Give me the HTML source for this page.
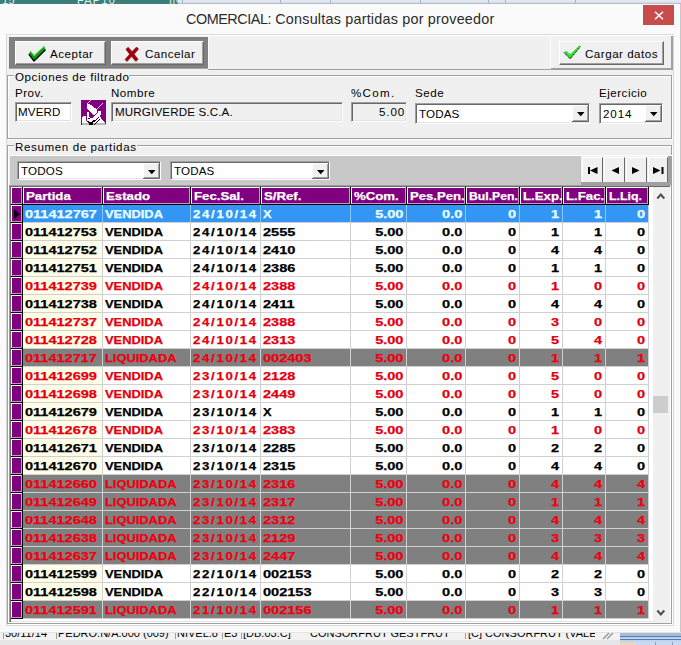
<!DOCTYPE html><html><head><meta charset="utf-8"><style>
*{margin:0;padding:0;box-sizing:border-box}
html,body{width:681px;height:645px;overflow:hidden;background:#fafafa;font-family:"Liberation Sans",sans-serif;font-size:11px;color:#000}
.a{position:absolute}
.t{position:absolute;white-space:pre;line-height:12px;letter-spacing:0.5px;font-size:11.6px}
.u{letter-spacing:0.15px}
.n{letter-spacing:0.9px}
.b{position:absolute;white-space:pre;line-height:13px;font-weight:bold;-webkit-text-stroke:0.25px}
.sl{transform-origin:0 0}
.sr{transform-origin:100% 0}
</style></head><body>
<div class="a" style="left:0;top:0;width:178px;height:4px;background:#3f7d7b;overflow:hidden"><div class="t" style="left:2px;top:-6px;color:#d8f4f0;font-size:11px;letter-spacing:0.5px">15</div><div class="t" style="left:77px;top:-6px;color:#d8f4f0;font-size:11px;letter-spacing:1.2px">FAP10</div><div class="t" style="left:169px;top:-6px;color:#d8f4f0;font-size:11px">IN</div></div>
<div class="a" style="left:178px;top:0;width:503px;height:4px;background:linear-gradient(#e6ebf2,#d4dce8);border-bottom:1px solid #b4bfcc"></div>
<div class="a" style="left:182px;top:0;width:1px;height:4px;background:#a8b4c4"></div>
<div class="a" style="left:280px;top:0;width:1px;height:4px;background:#a8b4c4"></div>
<div class="a" style="left:330px;top:0;width:1px;height:4px;background:#a8b4c4"></div>
<div class="a" style="left:420px;top:0;width:1px;height:4px;background:#a8b4c4"></div>
<div class="a" style="left:488px;top:0;width:1px;height:4px;background:#a8b4c4"></div>
<div class="a" style="left:505px;top:0;width:1px;height:4px;background:#a8b4c4"></div>
<div class="a" style="left:575px;top:0;width:1px;height:4px;background:#a8b4c4"></div>
<div class="a" style="left:186px;top:9px;white-space:pre;font-size:14.4px;line-height:20px;color:#2b2b2b"><span style="letter-spacing:-0.45px">COMERCIAL:</span><span style="letter-spacing:0.2px"> Consultas partidas por proveedor</span></div>
<div class="a" style="left:643px;top:5px;width:31px;height:20px;background:#c94c4c"></div>
<svg class="a" style="left:654px;top:11px" width="10" height="9" viewBox="0 0 10 9"><path d="M1 0.8 L9 8.2 M9 0.8 L1 8.2" stroke="#fff" stroke-width="1.5"/></svg>
<div class="a" style="left:6px;top:34px;width:668px;height:592px;background:#f0f0f0;border:1px solid #d9d9d9"></div>
<div class="a" style="left:7px;top:35px;width:666px;height:1px;background:#fff"></div>
<div class="a" style="left:9px;top:37px;width:199px;height:32px;background:#808080;border-bottom:1px solid #a4a4a4"></div>
<div class="a" style="left:15px;top:41px;width:91px;height:24px;background:#f0f0f0;border-top:1px solid #fff;border-left:1px solid #fff;border-right:1px solid #696969;border-bottom:1px solid #696969;box-shadow:inset -1px -1px 0 #a0a0a0"></div>
<div class="a" style="left:111px;top:41px;width:93px;height:24px;background:#f0f0f0;border-top:1px solid #fff;border-left:1px solid #fff;border-right:1px solid #696969;border-bottom:1px solid #696969;box-shadow:inset -1px -1px 0 #a0a0a0"></div>
<svg class="a" style="left:24px;top:42px" width="24" height="22" viewBox="0 0 24 22"><path d="M6.5 9 L4.8 12.2 L10 19 L21.5 7.8 L20.3 4.2 L10 14 Z" fill="#139a13"/><path d="M4.8 12.2 L10 19 L21.5 7.8" fill="none" stroke="#000" stroke-width="1.3" stroke-linejoin="round"/><path d="M6.5 9 L10 13.2 L20.3 4.2" fill="none" stroke="#5ee05e" stroke-width="1"/></svg>
<div class="t" style="left:50px;top:48px">Aceptar</div>
<svg class="a" style="left:124px;top:46px" width="16" height="17" viewBox="0 0 16 17"><path d="M1.8 3.2 L4.2 1.2 L8 5.6 L12.6 1 L14.6 3 L10.2 8.2 L14.2 13.3 L11.8 15.4 L7.6 10.6 L3 15.6 L1 13.6 L5.6 8.2 Z" fill="#a00010" stroke="#8a0010" stroke-width="0.5" stroke-linejoin="round"/></svg>
<div class="t" style="left:145px;top:48px">Cancelar</div>
<div class="a" style="left:208px;top:69px;width:342px;height:1px;background:#a0a0a0"></div>
<div class="a" style="left:208px;top:36px;width:1px;height:33px;background:#fafafa"></div>
<div class="a" style="left:550px;top:36px;width:123px;height:34px;background:#f0f0f0;border-left:1px solid #fff;border-bottom:2px solid #a0a0a0;border-right:2px solid #a0a0a0"></div>
<div class="a" style="left:559px;top:41px;width:105px;height:24px;background:#f0f0f0;border-top:1px solid #fff;border-left:1px solid #fff;border-right:1px solid #696969;border-bottom:1px solid #696969;box-shadow:inset -1px -1px 0 #a0a0a0"></div>
<svg class="a" style="left:559px;top:41px" width="24" height="22" viewBox="0 0 24 22"><path d="M4.8 11.2 L7.6 10 L11 13.4 L20.4 4.6 L21.4 5.6 L11.2 17.9 Z" fill="#2ee02e"/><path d="M5 11.6 L11.2 17.9 L21.4 5.6" fill="none" stroke="#000" stroke-width="1" stroke-dasharray="1.2 0.8"/></svg>
<div class="t" style="left:585px;top:48px">Cargar datos</div>
<div class="a" style="left:8px;top:76px;width:665px;height:64px;border:1px solid #fff"></div>
<div class="a" style="left:7px;top:75px;width:665px;height:64px;border:1px solid #a0a0a0"></div>
<div class="a" style="left:14px;top:71px;width:115px;height:8px;background:#f0f0f0"></div>
<div class="t" style="left:15px;top:71px;letter-spacing:0.57px">Opciones de filtrado</div>
<div class="t" style="left:15px;top:87px">Prov.</div>
<div class="t" style="left:111px;top:87px">Nombre</div>
<div class="t" style="left:351px;top:87px;letter-spacing:1.3px">%Com.</div>
<div class="t" style="left:415px;top:87px">Sede</div>
<div class="t" style="left:599px;top:87px">Ejercicio</div>
<div class="a" style="left:15px;top:102px;width:57px;height:20px;background:#fff;border-top:1px solid #a0a0a0;border-left:1px solid #a0a0a0;border-right:1px solid #fff;border-bottom:1px solid #fff;box-shadow:inset 1px 1px 0 #696969,inset -1px -1px 0 #e3e3e3"></div>
<div class="t u" style="left:18px;top:106px">MVERD</div>
<svg class="a" style="left:81px;top:100px" width="25" height="25" viewBox="0 0 25 25" shape-rendering="crispEdges"><rect width="25" height="25" fill="#800080"/><rect x="9" y="0" width="1" height="1" fill="#f0c8f0"/><rect x="8" y="1" width="1" height="1" fill="#f0c8f0"/><rect x="7" y="2" width="1" height="1" fill="#f0c8f0"/><rect x="6" y="3" width="1" height="1" fill="#f0c8f0"/><rect x="21" y="3" width="1" height="1" fill="#f0c8f0"/><rect x="6" y="4" width="3" height="1" fill="#fff6ff"/><rect x="20" y="4" width="1" height="1" fill="#f0c8f0"/><rect x="6" y="5" width="5" height="1" fill="#fff6ff"/><rect x="19" y="5" width="1" height="1" fill="#f0c8f0"/><rect x="6" y="6" width="6" height="1" fill="#fff6ff"/><rect x="18" y="6" width="1" height="1" fill="#f0c8f0"/><rect x="6" y="7" width="7" height="1" fill="#fff6ff"/><rect x="17" y="7" width="1" height="1" fill="#f0c8f0"/><rect x="6" y="8" width="9" height="1" fill="#fff6ff"/><rect x="16" y="8" width="1" height="1" fill="#f0c8f0"/><rect x="7" y="9" width="9" height="1" fill="#fff6ff"/><rect x="8" y="10" width="8" height="1" fill="#fff6ff"/><rect x="9" y="11" width="7" height="1" fill="#fff6ff"/><rect x="17" y="11" width="3" height="1" fill="#fff6ff"/><rect x="6" y="12" width="2" height="1" fill="#fff6ff"/><rect x="10" y="12" width="6" height="1" fill="#fff6ff"/><rect x="17" y="12" width="3" height="1" fill="#fff6ff"/><rect x="6" y="13" width="2" height="1" fill="#fff6ff"/><rect x="11" y="13" width="4" height="1" fill="#fff6ff"/><rect x="16" y="13" width="4" height="1" fill="#fff6ff"/><rect x="6" y="14" width="2" height="1" fill="#fff6ff"/><rect x="12" y="14" width="2" height="1" fill="#fff6ff"/><rect x="15" y="14" width="5" height="1" fill="#fff6ff"/><rect x="6" y="15" width="2" height="1" fill="#fff6ff"/><rect x="14" y="15" width="5" height="1" fill="#fff6ff"/><rect x="2" y="16" width="3" height="1" fill="#fff6ff"/><rect x="6" y="16" width="2" height="1" fill="#fff6ff"/><rect x="13" y="16" width="6" height="1" fill="#fff6ff"/><rect x="1" y="17" width="4" height="1" fill="#fff6ff"/><rect x="6" y="17" width="3" height="1" fill="#fff6ff"/><rect x="12" y="17" width="5" height="1" fill="#fff6ff"/><rect x="17" y="17" width="1" height="1" fill="#000"/><rect x="18" y="17" width="2" height="1" fill="#fff6ff"/><rect x="1" y="18" width="4" height="1" fill="#fff6ff"/><rect x="6" y="18" width="1" height="1" fill="#fff6ff"/><rect x="7" y="18" width="2" height="1" fill="#000"/><rect x="9" y="18" width="7" height="1" fill="#fff6ff"/><rect x="16" y="18" width="1" height="1" fill="#000"/><rect x="17" y="18" width="3" height="1" fill="#fff6ff"/><rect x="1" y="19" width="4" height="1" fill="#fff6ff"/><rect x="6" y="19" width="9" height="1" fill="#fff6ff"/><rect x="15" y="19" width="1" height="1" fill="#000"/><rect x="16" y="19" width="2" height="1" fill="#fff6ff"/><rect x="18" y="19" width="1" height="1" fill="#000"/><rect x="19" y="19" width="2" height="1" fill="#fff6ff"/><rect x="1" y="20" width="4" height="1" fill="#fff6ff"/><rect x="6" y="20" width="6" height="1" fill="#fff6ff"/><rect x="12" y="20" width="3" height="1" fill="#000"/><rect x="15" y="20" width="2" height="1" fill="#fff6ff"/><rect x="17" y="20" width="1" height="1" fill="#000"/><rect x="18" y="20" width="4" height="1" fill="#fff6ff"/><rect x="1" y="21" width="5" height="1" fill="#fff6ff"/><rect x="6" y="21" width="2" height="1" fill="#000"/><rect x="8" y="21" width="3" height="1" fill="#fff6ff"/><rect x="11" y="21" width="3" height="1" fill="#000"/><rect x="14" y="21" width="2" height="1" fill="#fff6ff"/><rect x="16" y="21" width="1" height="1" fill="#000"/><rect x="17" y="21" width="6" height="1" fill="#fff6ff"/><rect x="1" y="22" width="6" height="1" fill="#fff6ff"/><rect x="7" y="22" width="5" height="1" fill="#000"/><rect x="12" y="22" width="3" height="1" fill="#fff6ff"/><rect x="15" y="22" width="1" height="1" fill="#000"/><rect x="16" y="22" width="8" height="1" fill="#fff6ff"/><rect x="1" y="23" width="7" height="1" fill="#b8b8b8"/><rect x="8" y="23" width="4" height="1" fill="#000"/><rect x="12" y="23" width="2" height="1" fill="#b8b8b8"/><rect x="14" y="23" width="1" height="1" fill="#000"/><rect x="15" y="23" width="9" height="1" fill="#b8b8b8"/><rect x="1" y="24" width="7" height="1" fill="#b8b8b8"/><rect x="8" y="24" width="4" height="1" fill="#000"/><rect x="12" y="24" width="1" height="1" fill="#b8b8b8"/><rect x="13" y="24" width="1" height="1" fill="#000"/><rect x="14" y="24" width="11" height="1" fill="#b8b8b8"/></svg>
<div class="a" style="left:111px;top:102px;width:232px;height:20px;background:#f0f0f0;border-top:1px solid #a0a0a0;border-left:1px solid #a0a0a0;border-right:1px solid #fff;border-bottom:1px solid #fff;box-shadow:inset 1px 1px 0 #696969,inset -1px -1px 0 #e3e3e3"></div>
<div class="t u" style="left:115px;top:106px">MURGIVERDE S.C.A.</div>
<div class="a" style="left:351px;top:102px;width:56px;height:20px;background:#f0f0f0;border-top:1px solid #a0a0a0;border-left:1px solid #a0a0a0;border-right:1px solid #fff;border-bottom:1px solid #fff;box-shadow:inset 1px 1px 0 #696969,inset -1px -1px 0 #e3e3e3"></div>
<div class="t n" style="left:379px;top:106px">5.00</div>
<div class="a" style="left:415px;top:103px;width:175px;height:21px;background:#fff;border-top:1px solid #a0a0a0;border-left:1px solid #a0a0a0;border-right:1px solid #fff;border-bottom:1px solid #fff;box-shadow:inset 1px 1px 0 #696969,inset -1px -1px 0 #e3e3e3"></div>
<div class="t u" style="left:419px;top:108px">TODAS</div>
<div class="a" style="left:572px;top:105px;width:17px;height:17px;background:#f0f0f0;border-right:1px solid #696969;border-bottom:1px solid #696969;box-shadow:inset 1px 1px 0 #fff,inset -1px -1px 0 #a0a0a0"></div>
<svg class="a" style="left:577px;top:112px" width="8" height="5" viewBox="0 0 8 5"><path d="M0 0 L7.5 0 L3.75 4.2 Z" fill="#000"/></svg>
<div class="a" style="left:599px;top:103px;width:64px;height:21px;background:#fff;border-top:1px solid #a0a0a0;border-left:1px solid #a0a0a0;border-right:1px solid #fff;border-bottom:1px solid #fff;box-shadow:inset 1px 1px 0 #696969,inset -1px -1px 0 #e3e3e3"></div>
<div class="t n" style="left:603px;top:108px">2014</div>
<div class="a" style="left:645px;top:105px;width:17px;height:17px;background:#f0f0f0;border-right:1px solid #696969;border-bottom:1px solid #696969;box-shadow:inset 1px 1px 0 #fff,inset -1px -1px 0 #a0a0a0"></div>
<svg class="a" style="left:650px;top:112px" width="8" height="5" viewBox="0 0 8 5"><path d="M0 0 L7.5 0 L3.75 4.2 Z" fill="#000"/></svg>
<div class="a" style="left:8px;top:146px;width:665px;height:479px;border:1px solid #fff"></div>
<div class="a" style="left:7px;top:145px;width:665px;height:479px;border:1px solid #a0a0a0"></div>
<div class="a" style="left:14px;top:141px;width:123px;height:8px;background:#f0f0f0"></div>
<div class="t" style="left:15px;top:141px;letter-spacing:0.6px">Resumen de partidas</div>
<div class="a" style="left:10px;top:155px;width:662px;height:1px;background:#fff"></div>
<div class="a" style="left:10px;top:156px;width:571px;height:29px;background:#c8c8c8"></div>
<div class="a" style="left:17px;top:161px;width:144px;height:19px;background:#fff;border-top:1px solid #a0a0a0;border-left:1px solid #a0a0a0;border-right:1px solid #fff;border-bottom:1px solid #fff;box-shadow:inset 1px 1px 0 #696969,inset -1px -1px 0 #e3e3e3"></div>
<div class="t u" style="left:21px;top:165px">TODOS</div>
<div class="a" style="left:143px;top:163px;width:17px;height:16px;background:#f0f0f0;border-right:1px solid #696969;border-bottom:1px solid #696969;box-shadow:inset 1px 1px 0 #fff,inset -1px -1px 0 #a0a0a0"></div>
<svg class="a" style="left:148px;top:170px" width="8" height="5" viewBox="0 0 8 5"><path d="M0 0 L7.5 0 L3.75 4.2 Z" fill="#000"/></svg>
<div class="a" style="left:170px;top:161px;width:160px;height:19px;background:#fff;border-top:1px solid #a0a0a0;border-left:1px solid #a0a0a0;border-right:1px solid #fff;border-bottom:1px solid #fff;box-shadow:inset 1px 1px 0 #696969,inset -1px -1px 0 #e3e3e3"></div>
<div class="t u" style="left:174px;top:165px">TODAS</div>
<div class="a" style="left:312px;top:163px;width:17px;height:16px;background:#f0f0f0;border-right:1px solid #696969;border-bottom:1px solid #696969;box-shadow:inset 1px 1px 0 #fff,inset -1px -1px 0 #a0a0a0"></div>
<svg class="a" style="left:317px;top:170px" width="8" height="5" viewBox="0 0 8 5"><path d="M0 0 L7.5 0 L3.75 4.2 Z" fill="#000"/></svg>
<div class="a" style="left:581px;top:156px;width:90px;height:29px;background:#f0f0f0;border-right:3px solid #a0a0a0;border-bottom:3px solid #a0a0a0"></div>
<div class="a" style="left:582px;top:157px;width:21px;height:25px;background:#f0f0f0;border-top:1px solid #fff;border-left:1px solid #fff;border-right:1px solid #696969"></div>
<div class="a" style="left:604px;top:157px;width:21px;height:25px;background:#f0f0f0;border-top:1px solid #fff;border-left:1px solid #fff;border-right:1px solid #696969"></div>
<div class="a" style="left:626px;top:157px;width:21px;height:25px;background:#f0f0f0;border-top:1px solid #fff;border-left:1px solid #fff;border-right:1px solid #696969"></div>
<div class="a" style="left:648px;top:157px;width:20px;height:25px;background:#f0f0f0;border-top:1px solid #fff;border-left:1px solid #fff;border-right:1px solid #696969"></div>
<svg class="a" style="left:588px;top:167px" width="10" height="8"><rect x="0" y="0" width="2" height="7" fill="#000"/><path d="M9.5 0 L9.5 7 L2 3.5 Z" fill="#000"/></svg>
<svg class="a" style="left:611px;top:167px" width="9" height="8"><path d="M8 0 L8 7 L0.5 3.5 Z" fill="#000"/></svg>
<svg class="a" style="left:632px;top:167px" width="9" height="8"><path d="M0 0 L0 7 L7.5 3.5 Z" fill="#000"/></svg>
<svg class="a" style="left:653px;top:167px" width="11" height="8"><path d="M0 0 L0 7 L7.5 3.5 Z" fill="#000"/><rect x="8.5" y="0" width="2" height="7" fill="#000"/></svg>
<div class="a" style="left:9px;top:185px;width:662px;height:438px;background:#fff;border-top:1px solid #a0a0a0;border-left:1px solid #a0a0a0;border-right:1px solid #fff;border-bottom:1px solid #fff;box-shadow:inset 1px 1px 0 #696969,inset -1px -1px 0 #e3e3e3"></div>
<div class="a" style="left:11px;top:187px;width:638px;height:18px;background:#000"></div>
<div class="a" style="left:11px;top:187px;width:11px;height:17px;background:#800080;border-top:1px solid #fff;border-left:1px solid #fff;border-right:1px solid #c896c8;border-bottom:1px solid #c896c8"></div>
<div class="a" style="left:23px;top:187px;width:79px;height:17px;background:#800080;border-top:1px solid #fff;border-left:1px solid #fff;border-right:1px solid #c896c8;border-bottom:1px solid #c896c8"></div>
<div class="b sl" style="left:26px;top:190px;color:#fff;transform:scaleX(1.2)">Partida</div>
<div class="a" style="left:103px;top:187px;width:87px;height:17px;background:#800080;border-top:1px solid #fff;border-left:1px solid #fff;border-right:1px solid #c896c8;border-bottom:1px solid #c896c8"></div>
<div class="b sl" style="left:106px;top:190px;color:#fff;transform:scaleX(1.2)">Estado</div>
<div class="a" style="left:191px;top:187px;width:69px;height:17px;background:#800080;border-top:1px solid #fff;border-left:1px solid #fff;border-right:1px solid #c896c8;border-bottom:1px solid #c896c8"></div>
<div class="b sl" style="left:194px;top:190px;color:#fff;transform:scaleX(1.2)">Fec.Sal.</div>
<div class="a" style="left:261px;top:187px;width:89px;height:17px;background:#800080;border-top:1px solid #fff;border-left:1px solid #fff;border-right:1px solid #c896c8;border-bottom:1px solid #c896c8"></div>
<div class="b sl" style="left:264px;top:190px;color:#fff;transform:scaleX(1.2)">S/Ref.</div>
<div class="a" style="left:351px;top:187px;width:55px;height:17px;background:#800080;border-top:1px solid #fff;border-left:1px solid #fff;border-right:1px solid #c896c8;border-bottom:1px solid #c896c8"></div>
<div class="b sl" style="left:354px;top:190px;color:#fff;transform:scaleX(1.2)">%Com.</div>
<div class="a" style="left:407px;top:187px;width:58px;height:17px;background:#800080;border-top:1px solid #fff;border-left:1px solid #fff;border-right:1px solid #c896c8;border-bottom:1px solid #c896c8"></div>
<div class="b sl" style="left:410px;top:190px;color:#fff;transform:scaleX(1.19)">Pes.Pen.</div>
<div class="a" style="left:466px;top:187px;width:53px;height:17px;background:#800080;border-top:1px solid #fff;border-left:1px solid #fff;border-right:1px solid #c896c8;border-bottom:1px solid #c896c8"></div>
<div class="b sl" style="left:469px;top:190px;color:#fff;transform:scaleX(1.11)">Bul.Pen.</div>
<div class="a" style="left:520px;top:187px;width:42px;height:17px;background:#800080;border-top:1px solid #fff;border-left:1px solid #fff;border-right:1px solid #c896c8;border-bottom:1px solid #c896c8"></div>
<div class="b sl" style="left:523px;top:190px;color:#fff;transform:scaleX(1.2)">L.Exp.</div>
<div class="a" style="left:563px;top:187px;width:42px;height:17px;background:#800080;border-top:1px solid #fff;border-left:1px solid #fff;border-right:1px solid #c896c8;border-bottom:1px solid #c896c8"></div>
<div class="b sl" style="left:566px;top:190px;color:#fff;transform:scaleX(1.2)">L.Fac.</div>
<div class="a" style="left:606px;top:187px;width:42px;height:17px;background:#800080;border-top:1px solid #fff;border-left:1px solid #fff;border-right:1px solid #c896c8;border-bottom:1px solid #c896c8"></div>
<div class="b sl" style="left:609px;top:190px;color:#fff;transform:scaleX(1.12)">L.Liq.</div>
<div class="a" style="left:11px;top:205px;width:12px;height:18px;background:#000"></div>
<div class="a" style="left:11px;top:205px;width:11px;height:17px;background:#800080;border-top:1px solid #fff;border-left:1px solid #fff;border-right:1px solid #c896c8;border-bottom:1px solid #c896c8"></div>
<svg class="a" style="left:13px;top:209px" width="8" height="10"><path d="M1 0 L7 5 L1 10 Z" fill="#000"/></svg>
<div class="a" style="left:23px;top:205px;width:626px;height:17px;background:#3396f4"></div>
<div class="a" style="left:23px;top:222px;width:626px;height:1px;background:#d0d0d0"></div>
<div class="a" style="left:102px;top:205px;width:1px;height:17px;background:#8cc6ff"></div>
<div class="a" style="left:190px;top:205px;width:1px;height:17px;background:#8cc6ff"></div>
<div class="a" style="left:260px;top:205px;width:1px;height:17px;background:#8cc6ff"></div>
<div class="a" style="left:350px;top:205px;width:1px;height:17px;background:#8cc6ff"></div>
<div class="a" style="left:406px;top:205px;width:1px;height:17px;background:#8cc6ff"></div>
<div class="a" style="left:465px;top:205px;width:1px;height:17px;background:#8cc6ff"></div>
<div class="a" style="left:519px;top:205px;width:1px;height:17px;background:#8cc6ff"></div>
<div class="a" style="left:562px;top:205px;width:1px;height:17px;background:#8cc6ff"></div>
<div class="a" style="left:605px;top:205px;width:1px;height:17px;background:#8cc6ff"></div>
<div class="a" style="left:648px;top:205px;width:1px;height:18px;background:#d0d0d0"></div>
<div class="b sl" style="left:25px;top:208px;color:#e8ffff;transform:scaleX(1.32)">011412767</div>
<div class="b sl" style="left:105px;top:208px;color:#e8ffff;transform:scaleX(1.17)">VENDIDA</div>
<div class="b sl" style="left:193px;top:208px;color:#e8ffff;transform:scaleX(1.2);letter-spacing:1.4px">24/10/14</div>
<div class="b sl" style="left:263px;top:208px;color:#e8ffff;transform:scaleX(1.17)">X</div>
<div class="b sr" style="right:278px;top:208px;color:#e8ffff;transform:scaleX(1.32)">5.00</div>
<div class="b sr" style="right:219px;top:208px;color:#e8ffff;transform:scaleX(1.32)">0.0</div>
<div class="b sr" style="right:165px;top:208px;color:#e8ffff;transform:scaleX(1.32)">0</div>
<div class="b sr" style="right:122px;top:208px;color:#e8ffff;transform:scaleX(1.32)">1</div>
<div class="b sr" style="right:79px;top:208px;color:#e8ffff;transform:scaleX(1.32)">1</div>
<div class="b sr" style="right:36px;top:208px;color:#e8ffff;transform:scaleX(1.32)">0</div>
<div class="a" style="left:11px;top:223px;width:12px;height:18px;background:#000"></div>
<div class="a" style="left:11px;top:223px;width:11px;height:17px;background:#800080;border-top:1px solid #fff;border-left:1px solid #fff;border-right:1px solid #c896c8;border-bottom:1px solid #c896c8"></div>
<div class="a" style="left:23px;top:223px;width:626px;height:17px;background:#fff"></div>
<div class="a" style="left:23px;top:223px;width:79px;height:17px;background:#fffde8"></div>
<div class="a" style="left:23px;top:240px;width:626px;height:1px;background:#d0d0d0"></div>
<div class="a" style="left:102px;top:223px;width:1px;height:17px;background:#d0d0d0"></div>
<div class="a" style="left:190px;top:223px;width:1px;height:17px;background:#d0d0d0"></div>
<div class="a" style="left:260px;top:223px;width:1px;height:17px;background:#d0d0d0"></div>
<div class="a" style="left:350px;top:223px;width:1px;height:17px;background:#d0d0d0"></div>
<div class="a" style="left:406px;top:223px;width:1px;height:17px;background:#d0d0d0"></div>
<div class="a" style="left:465px;top:223px;width:1px;height:17px;background:#d0d0d0"></div>
<div class="a" style="left:519px;top:223px;width:1px;height:17px;background:#d0d0d0"></div>
<div class="a" style="left:562px;top:223px;width:1px;height:17px;background:#d0d0d0"></div>
<div class="a" style="left:605px;top:223px;width:1px;height:17px;background:#d0d0d0"></div>
<div class="a" style="left:648px;top:223px;width:1px;height:18px;background:#d0d0d0"></div>
<div class="b sl" style="left:25px;top:226px;color:#000;transform:scaleX(1.32)">011412753</div>
<div class="b sl" style="left:105px;top:226px;color:#000;transform:scaleX(1.17)">VENDIDA</div>
<div class="b sl" style="left:193px;top:226px;color:#000;transform:scaleX(1.2);letter-spacing:1.4px">24/10/14</div>
<div class="b sl" style="left:263px;top:226px;color:#000;transform:scaleX(1.32)">2555</div>
<div class="b sr" style="right:278px;top:226px;color:#000;transform:scaleX(1.32)">5.00</div>
<div class="b sr" style="right:219px;top:226px;color:#000;transform:scaleX(1.32)">0.0</div>
<div class="b sr" style="right:165px;top:226px;color:#000;transform:scaleX(1.32)">0</div>
<div class="b sr" style="right:122px;top:226px;color:#000;transform:scaleX(1.32)">1</div>
<div class="b sr" style="right:79px;top:226px;color:#000;transform:scaleX(1.32)">1</div>
<div class="b sr" style="right:36px;top:226px;color:#000;transform:scaleX(1.32)">0</div>
<div class="a" style="left:11px;top:241px;width:12px;height:18px;background:#000"></div>
<div class="a" style="left:11px;top:241px;width:11px;height:17px;background:#800080;border-top:1px solid #fff;border-left:1px solid #fff;border-right:1px solid #c896c8;border-bottom:1px solid #c896c8"></div>
<div class="a" style="left:23px;top:241px;width:626px;height:17px;background:#fff"></div>
<div class="a" style="left:23px;top:241px;width:79px;height:17px;background:#fffde8"></div>
<div class="a" style="left:23px;top:258px;width:626px;height:1px;background:#d0d0d0"></div>
<div class="a" style="left:102px;top:241px;width:1px;height:17px;background:#d0d0d0"></div>
<div class="a" style="left:190px;top:241px;width:1px;height:17px;background:#d0d0d0"></div>
<div class="a" style="left:260px;top:241px;width:1px;height:17px;background:#d0d0d0"></div>
<div class="a" style="left:350px;top:241px;width:1px;height:17px;background:#d0d0d0"></div>
<div class="a" style="left:406px;top:241px;width:1px;height:17px;background:#d0d0d0"></div>
<div class="a" style="left:465px;top:241px;width:1px;height:17px;background:#d0d0d0"></div>
<div class="a" style="left:519px;top:241px;width:1px;height:17px;background:#d0d0d0"></div>
<div class="a" style="left:562px;top:241px;width:1px;height:17px;background:#d0d0d0"></div>
<div class="a" style="left:605px;top:241px;width:1px;height:17px;background:#d0d0d0"></div>
<div class="a" style="left:648px;top:241px;width:1px;height:18px;background:#d0d0d0"></div>
<div class="b sl" style="left:25px;top:244px;color:#000;transform:scaleX(1.32)">011412752</div>
<div class="b sl" style="left:105px;top:244px;color:#000;transform:scaleX(1.17)">VENDIDA</div>
<div class="b sl" style="left:193px;top:244px;color:#000;transform:scaleX(1.2);letter-spacing:1.4px">24/10/14</div>
<div class="b sl" style="left:263px;top:244px;color:#000;transform:scaleX(1.32)">2410</div>
<div class="b sr" style="right:278px;top:244px;color:#000;transform:scaleX(1.32)">5.00</div>
<div class="b sr" style="right:219px;top:244px;color:#000;transform:scaleX(1.32)">0.0</div>
<div class="b sr" style="right:165px;top:244px;color:#000;transform:scaleX(1.32)">0</div>
<div class="b sr" style="right:122px;top:244px;color:#000;transform:scaleX(1.32)">4</div>
<div class="b sr" style="right:79px;top:244px;color:#000;transform:scaleX(1.32)">4</div>
<div class="b sr" style="right:36px;top:244px;color:#000;transform:scaleX(1.32)">0</div>
<div class="a" style="left:11px;top:259px;width:12px;height:18px;background:#000"></div>
<div class="a" style="left:11px;top:259px;width:11px;height:17px;background:#800080;border-top:1px solid #fff;border-left:1px solid #fff;border-right:1px solid #c896c8;border-bottom:1px solid #c896c8"></div>
<div class="a" style="left:23px;top:259px;width:626px;height:17px;background:#fff"></div>
<div class="a" style="left:23px;top:259px;width:79px;height:17px;background:#fffde8"></div>
<div class="a" style="left:23px;top:276px;width:626px;height:1px;background:#d0d0d0"></div>
<div class="a" style="left:102px;top:259px;width:1px;height:17px;background:#d0d0d0"></div>
<div class="a" style="left:190px;top:259px;width:1px;height:17px;background:#d0d0d0"></div>
<div class="a" style="left:260px;top:259px;width:1px;height:17px;background:#d0d0d0"></div>
<div class="a" style="left:350px;top:259px;width:1px;height:17px;background:#d0d0d0"></div>
<div class="a" style="left:406px;top:259px;width:1px;height:17px;background:#d0d0d0"></div>
<div class="a" style="left:465px;top:259px;width:1px;height:17px;background:#d0d0d0"></div>
<div class="a" style="left:519px;top:259px;width:1px;height:17px;background:#d0d0d0"></div>
<div class="a" style="left:562px;top:259px;width:1px;height:17px;background:#d0d0d0"></div>
<div class="a" style="left:605px;top:259px;width:1px;height:17px;background:#d0d0d0"></div>
<div class="a" style="left:648px;top:259px;width:1px;height:18px;background:#d0d0d0"></div>
<div class="b sl" style="left:25px;top:262px;color:#000;transform:scaleX(1.32)">011412751</div>
<div class="b sl" style="left:105px;top:262px;color:#000;transform:scaleX(1.17)">VENDIDA</div>
<div class="b sl" style="left:193px;top:262px;color:#000;transform:scaleX(1.2);letter-spacing:1.4px">24/10/14</div>
<div class="b sl" style="left:263px;top:262px;color:#000;transform:scaleX(1.32)">2386</div>
<div class="b sr" style="right:278px;top:262px;color:#000;transform:scaleX(1.32)">5.00</div>
<div class="b sr" style="right:219px;top:262px;color:#000;transform:scaleX(1.32)">0.0</div>
<div class="b sr" style="right:165px;top:262px;color:#000;transform:scaleX(1.32)">0</div>
<div class="b sr" style="right:122px;top:262px;color:#000;transform:scaleX(1.32)">1</div>
<div class="b sr" style="right:79px;top:262px;color:#000;transform:scaleX(1.32)">1</div>
<div class="b sr" style="right:36px;top:262px;color:#000;transform:scaleX(1.32)">0</div>
<div class="a" style="left:11px;top:277px;width:12px;height:18px;background:#000"></div>
<div class="a" style="left:11px;top:277px;width:11px;height:17px;background:#800080;border-top:1px solid #fff;border-left:1px solid #fff;border-right:1px solid #c896c8;border-bottom:1px solid #c896c8"></div>
<div class="a" style="left:23px;top:277px;width:626px;height:17px;background:#fff"></div>
<div class="a" style="left:23px;top:277px;width:79px;height:17px;background:#fffde8"></div>
<div class="a" style="left:23px;top:294px;width:626px;height:1px;background:#d0d0d0"></div>
<div class="a" style="left:102px;top:277px;width:1px;height:17px;background:#d0d0d0"></div>
<div class="a" style="left:190px;top:277px;width:1px;height:17px;background:#d0d0d0"></div>
<div class="a" style="left:260px;top:277px;width:1px;height:17px;background:#d0d0d0"></div>
<div class="a" style="left:350px;top:277px;width:1px;height:17px;background:#d0d0d0"></div>
<div class="a" style="left:406px;top:277px;width:1px;height:17px;background:#d0d0d0"></div>
<div class="a" style="left:465px;top:277px;width:1px;height:17px;background:#d0d0d0"></div>
<div class="a" style="left:519px;top:277px;width:1px;height:17px;background:#d0d0d0"></div>
<div class="a" style="left:562px;top:277px;width:1px;height:17px;background:#d0d0d0"></div>
<div class="a" style="left:605px;top:277px;width:1px;height:17px;background:#d0d0d0"></div>
<div class="a" style="left:648px;top:277px;width:1px;height:18px;background:#d0d0d0"></div>
<div class="b sl" style="left:25px;top:280px;color:#e2000e;transform:scaleX(1.32)">011412739</div>
<div class="b sl" style="left:105px;top:280px;color:#e2000e;transform:scaleX(1.17)">VENDIDA</div>
<div class="b sl" style="left:193px;top:280px;color:#e2000e;transform:scaleX(1.2);letter-spacing:1.4px">24/10/14</div>
<div class="b sl" style="left:263px;top:280px;color:#e2000e;transform:scaleX(1.32)">2388</div>
<div class="b sr" style="right:278px;top:280px;color:#e2000e;transform:scaleX(1.32)">5.00</div>
<div class="b sr" style="right:219px;top:280px;color:#e2000e;transform:scaleX(1.32)">0.0</div>
<div class="b sr" style="right:165px;top:280px;color:#e2000e;transform:scaleX(1.32)">0</div>
<div class="b sr" style="right:122px;top:280px;color:#e2000e;transform:scaleX(1.32)">1</div>
<div class="b sr" style="right:79px;top:280px;color:#e2000e;transform:scaleX(1.32)">0</div>
<div class="b sr" style="right:36px;top:280px;color:#e2000e;transform:scaleX(1.32)">0</div>
<div class="a" style="left:11px;top:295px;width:12px;height:18px;background:#000"></div>
<div class="a" style="left:11px;top:295px;width:11px;height:17px;background:#800080;border-top:1px solid #fff;border-left:1px solid #fff;border-right:1px solid #c896c8;border-bottom:1px solid #c896c8"></div>
<div class="a" style="left:23px;top:295px;width:626px;height:17px;background:#fff"></div>
<div class="a" style="left:23px;top:295px;width:79px;height:17px;background:#fffde8"></div>
<div class="a" style="left:23px;top:312px;width:626px;height:1px;background:#d0d0d0"></div>
<div class="a" style="left:102px;top:295px;width:1px;height:17px;background:#d0d0d0"></div>
<div class="a" style="left:190px;top:295px;width:1px;height:17px;background:#d0d0d0"></div>
<div class="a" style="left:260px;top:295px;width:1px;height:17px;background:#d0d0d0"></div>
<div class="a" style="left:350px;top:295px;width:1px;height:17px;background:#d0d0d0"></div>
<div class="a" style="left:406px;top:295px;width:1px;height:17px;background:#d0d0d0"></div>
<div class="a" style="left:465px;top:295px;width:1px;height:17px;background:#d0d0d0"></div>
<div class="a" style="left:519px;top:295px;width:1px;height:17px;background:#d0d0d0"></div>
<div class="a" style="left:562px;top:295px;width:1px;height:17px;background:#d0d0d0"></div>
<div class="a" style="left:605px;top:295px;width:1px;height:17px;background:#d0d0d0"></div>
<div class="a" style="left:648px;top:295px;width:1px;height:18px;background:#d0d0d0"></div>
<div class="b sl" style="left:25px;top:298px;color:#000;transform:scaleX(1.32)">011412738</div>
<div class="b sl" style="left:105px;top:298px;color:#000;transform:scaleX(1.17)">VENDIDA</div>
<div class="b sl" style="left:193px;top:298px;color:#000;transform:scaleX(1.2);letter-spacing:1.4px">24/10/14</div>
<div class="b sl" style="left:263px;top:298px;color:#000;transform:scaleX(1.32)">2411</div>
<div class="b sr" style="right:278px;top:298px;color:#000;transform:scaleX(1.32)">5.00</div>
<div class="b sr" style="right:219px;top:298px;color:#000;transform:scaleX(1.32)">0.0</div>
<div class="b sr" style="right:165px;top:298px;color:#000;transform:scaleX(1.32)">0</div>
<div class="b sr" style="right:122px;top:298px;color:#000;transform:scaleX(1.32)">4</div>
<div class="b sr" style="right:79px;top:298px;color:#000;transform:scaleX(1.32)">4</div>
<div class="b sr" style="right:36px;top:298px;color:#000;transform:scaleX(1.32)">0</div>
<div class="a" style="left:11px;top:313px;width:12px;height:18px;background:#000"></div>
<div class="a" style="left:11px;top:313px;width:11px;height:17px;background:#800080;border-top:1px solid #fff;border-left:1px solid #fff;border-right:1px solid #c896c8;border-bottom:1px solid #c896c8"></div>
<div class="a" style="left:23px;top:313px;width:626px;height:17px;background:#fff"></div>
<div class="a" style="left:23px;top:313px;width:79px;height:17px;background:#fffde8"></div>
<div class="a" style="left:23px;top:330px;width:626px;height:1px;background:#d0d0d0"></div>
<div class="a" style="left:102px;top:313px;width:1px;height:17px;background:#d0d0d0"></div>
<div class="a" style="left:190px;top:313px;width:1px;height:17px;background:#d0d0d0"></div>
<div class="a" style="left:260px;top:313px;width:1px;height:17px;background:#d0d0d0"></div>
<div class="a" style="left:350px;top:313px;width:1px;height:17px;background:#d0d0d0"></div>
<div class="a" style="left:406px;top:313px;width:1px;height:17px;background:#d0d0d0"></div>
<div class="a" style="left:465px;top:313px;width:1px;height:17px;background:#d0d0d0"></div>
<div class="a" style="left:519px;top:313px;width:1px;height:17px;background:#d0d0d0"></div>
<div class="a" style="left:562px;top:313px;width:1px;height:17px;background:#d0d0d0"></div>
<div class="a" style="left:605px;top:313px;width:1px;height:17px;background:#d0d0d0"></div>
<div class="a" style="left:648px;top:313px;width:1px;height:18px;background:#d0d0d0"></div>
<div class="b sl" style="left:25px;top:316px;color:#e2000e;transform:scaleX(1.32)">011412737</div>
<div class="b sl" style="left:105px;top:316px;color:#e2000e;transform:scaleX(1.17)">VENDIDA</div>
<div class="b sl" style="left:193px;top:316px;color:#e2000e;transform:scaleX(1.2);letter-spacing:1.4px">24/10/14</div>
<div class="b sl" style="left:263px;top:316px;color:#e2000e;transform:scaleX(1.32)">2388</div>
<div class="b sr" style="right:278px;top:316px;color:#e2000e;transform:scaleX(1.32)">5.00</div>
<div class="b sr" style="right:219px;top:316px;color:#e2000e;transform:scaleX(1.32)">0.0</div>
<div class="b sr" style="right:165px;top:316px;color:#e2000e;transform:scaleX(1.32)">0</div>
<div class="b sr" style="right:122px;top:316px;color:#e2000e;transform:scaleX(1.32)">3</div>
<div class="b sr" style="right:79px;top:316px;color:#e2000e;transform:scaleX(1.32)">0</div>
<div class="b sr" style="right:36px;top:316px;color:#e2000e;transform:scaleX(1.32)">0</div>
<div class="a" style="left:11px;top:331px;width:12px;height:18px;background:#000"></div>
<div class="a" style="left:11px;top:331px;width:11px;height:17px;background:#800080;border-top:1px solid #fff;border-left:1px solid #fff;border-right:1px solid #c896c8;border-bottom:1px solid #c896c8"></div>
<div class="a" style="left:23px;top:331px;width:626px;height:17px;background:#fff"></div>
<div class="a" style="left:23px;top:331px;width:79px;height:17px;background:#fffde8"></div>
<div class="a" style="left:23px;top:348px;width:626px;height:1px;background:#d0d0d0"></div>
<div class="a" style="left:102px;top:331px;width:1px;height:17px;background:#d0d0d0"></div>
<div class="a" style="left:190px;top:331px;width:1px;height:17px;background:#d0d0d0"></div>
<div class="a" style="left:260px;top:331px;width:1px;height:17px;background:#d0d0d0"></div>
<div class="a" style="left:350px;top:331px;width:1px;height:17px;background:#d0d0d0"></div>
<div class="a" style="left:406px;top:331px;width:1px;height:17px;background:#d0d0d0"></div>
<div class="a" style="left:465px;top:331px;width:1px;height:17px;background:#d0d0d0"></div>
<div class="a" style="left:519px;top:331px;width:1px;height:17px;background:#d0d0d0"></div>
<div class="a" style="left:562px;top:331px;width:1px;height:17px;background:#d0d0d0"></div>
<div class="a" style="left:605px;top:331px;width:1px;height:17px;background:#d0d0d0"></div>
<div class="a" style="left:648px;top:331px;width:1px;height:18px;background:#d0d0d0"></div>
<div class="b sl" style="left:25px;top:334px;color:#e2000e;transform:scaleX(1.32)">011412728</div>
<div class="b sl" style="left:105px;top:334px;color:#e2000e;transform:scaleX(1.17)">VENDIDA</div>
<div class="b sl" style="left:193px;top:334px;color:#e2000e;transform:scaleX(1.2);letter-spacing:1.4px">24/10/14</div>
<div class="b sl" style="left:263px;top:334px;color:#e2000e;transform:scaleX(1.32)">2313</div>
<div class="b sr" style="right:278px;top:334px;color:#e2000e;transform:scaleX(1.32)">5.00</div>
<div class="b sr" style="right:219px;top:334px;color:#e2000e;transform:scaleX(1.32)">0.0</div>
<div class="b sr" style="right:165px;top:334px;color:#e2000e;transform:scaleX(1.32)">0</div>
<div class="b sr" style="right:122px;top:334px;color:#e2000e;transform:scaleX(1.32)">5</div>
<div class="b sr" style="right:79px;top:334px;color:#e2000e;transform:scaleX(1.32)">4</div>
<div class="b sr" style="right:36px;top:334px;color:#e2000e;transform:scaleX(1.32)">0</div>
<div class="a" style="left:11px;top:349px;width:12px;height:18px;background:#000"></div>
<div class="a" style="left:11px;top:349px;width:11px;height:17px;background:#800080;border-top:1px solid #fff;border-left:1px solid #fff;border-right:1px solid #c896c8;border-bottom:1px solid #c896c8"></div>
<div class="a" style="left:23px;top:349px;width:626px;height:17px;background:#808080"></div>
<div class="a" style="left:23px;top:366px;width:626px;height:1px;background:#d0d0d0"></div>
<div class="a" style="left:102px;top:349px;width:1px;height:17px;background:#d0d0d0"></div>
<div class="a" style="left:190px;top:349px;width:1px;height:17px;background:#d0d0d0"></div>
<div class="a" style="left:260px;top:349px;width:1px;height:17px;background:#d0d0d0"></div>
<div class="a" style="left:350px;top:349px;width:1px;height:17px;background:#d0d0d0"></div>
<div class="a" style="left:406px;top:349px;width:1px;height:17px;background:#d0d0d0"></div>
<div class="a" style="left:465px;top:349px;width:1px;height:17px;background:#d0d0d0"></div>
<div class="a" style="left:519px;top:349px;width:1px;height:17px;background:#d0d0d0"></div>
<div class="a" style="left:562px;top:349px;width:1px;height:17px;background:#d0d0d0"></div>
<div class="a" style="left:605px;top:349px;width:1px;height:17px;background:#d0d0d0"></div>
<div class="a" style="left:648px;top:349px;width:1px;height:18px;background:#d0d0d0"></div>
<div class="b sl" style="left:25px;top:352px;color:#ec0010;transform:scaleX(1.32)">011412717</div>
<div class="b sl" style="left:105px;top:352px;color:#ec0010;transform:scaleX(1.17)">LIQUIDADA</div>
<div class="b sl" style="left:193px;top:352px;color:#ec0010;transform:scaleX(1.2);letter-spacing:1.4px">24/10/14</div>
<div class="b sl" style="left:263px;top:352px;color:#ec0010;transform:scaleX(1.32)">002403</div>
<div class="b sr" style="right:278px;top:352px;color:#ec0010;transform:scaleX(1.32)">5.00</div>
<div class="b sr" style="right:219px;top:352px;color:#ec0010;transform:scaleX(1.32)">0.0</div>
<div class="b sr" style="right:165px;top:352px;color:#ec0010;transform:scaleX(1.32)">0</div>
<div class="b sr" style="right:122px;top:352px;color:#ec0010;transform:scaleX(1.32)">1</div>
<div class="b sr" style="right:79px;top:352px;color:#ec0010;transform:scaleX(1.32)">1</div>
<div class="b sr" style="right:36px;top:352px;color:#ec0010;transform:scaleX(1.32)">1</div>
<div class="a" style="left:11px;top:367px;width:12px;height:18px;background:#000"></div>
<div class="a" style="left:11px;top:367px;width:11px;height:17px;background:#800080;border-top:1px solid #fff;border-left:1px solid #fff;border-right:1px solid #c896c8;border-bottom:1px solid #c896c8"></div>
<div class="a" style="left:23px;top:367px;width:626px;height:17px;background:#fff"></div>
<div class="a" style="left:23px;top:367px;width:79px;height:17px;background:#fffde8"></div>
<div class="a" style="left:23px;top:384px;width:626px;height:1px;background:#d0d0d0"></div>
<div class="a" style="left:102px;top:367px;width:1px;height:17px;background:#d0d0d0"></div>
<div class="a" style="left:190px;top:367px;width:1px;height:17px;background:#d0d0d0"></div>
<div class="a" style="left:260px;top:367px;width:1px;height:17px;background:#d0d0d0"></div>
<div class="a" style="left:350px;top:367px;width:1px;height:17px;background:#d0d0d0"></div>
<div class="a" style="left:406px;top:367px;width:1px;height:17px;background:#d0d0d0"></div>
<div class="a" style="left:465px;top:367px;width:1px;height:17px;background:#d0d0d0"></div>
<div class="a" style="left:519px;top:367px;width:1px;height:17px;background:#d0d0d0"></div>
<div class="a" style="left:562px;top:367px;width:1px;height:17px;background:#d0d0d0"></div>
<div class="a" style="left:605px;top:367px;width:1px;height:17px;background:#d0d0d0"></div>
<div class="a" style="left:648px;top:367px;width:1px;height:18px;background:#d0d0d0"></div>
<div class="b sl" style="left:25px;top:370px;color:#e2000e;transform:scaleX(1.32)">011412699</div>
<div class="b sl" style="left:105px;top:370px;color:#e2000e;transform:scaleX(1.17)">VENDIDA</div>
<div class="b sl" style="left:193px;top:370px;color:#e2000e;transform:scaleX(1.2);letter-spacing:1.4px">23/10/14</div>
<div class="b sl" style="left:263px;top:370px;color:#e2000e;transform:scaleX(1.32)">2128</div>
<div class="b sr" style="right:278px;top:370px;color:#e2000e;transform:scaleX(1.32)">5.00</div>
<div class="b sr" style="right:219px;top:370px;color:#e2000e;transform:scaleX(1.32)">0.0</div>
<div class="b sr" style="right:165px;top:370px;color:#e2000e;transform:scaleX(1.32)">0</div>
<div class="b sr" style="right:122px;top:370px;color:#e2000e;transform:scaleX(1.32)">5</div>
<div class="b sr" style="right:79px;top:370px;color:#e2000e;transform:scaleX(1.32)">0</div>
<div class="b sr" style="right:36px;top:370px;color:#e2000e;transform:scaleX(1.32)">0</div>
<div class="a" style="left:11px;top:385px;width:12px;height:18px;background:#000"></div>
<div class="a" style="left:11px;top:385px;width:11px;height:17px;background:#800080;border-top:1px solid #fff;border-left:1px solid #fff;border-right:1px solid #c896c8;border-bottom:1px solid #c896c8"></div>
<div class="a" style="left:23px;top:385px;width:626px;height:17px;background:#fff"></div>
<div class="a" style="left:23px;top:385px;width:79px;height:17px;background:#fffde8"></div>
<div class="a" style="left:23px;top:402px;width:626px;height:1px;background:#d0d0d0"></div>
<div class="a" style="left:102px;top:385px;width:1px;height:17px;background:#d0d0d0"></div>
<div class="a" style="left:190px;top:385px;width:1px;height:17px;background:#d0d0d0"></div>
<div class="a" style="left:260px;top:385px;width:1px;height:17px;background:#d0d0d0"></div>
<div class="a" style="left:350px;top:385px;width:1px;height:17px;background:#d0d0d0"></div>
<div class="a" style="left:406px;top:385px;width:1px;height:17px;background:#d0d0d0"></div>
<div class="a" style="left:465px;top:385px;width:1px;height:17px;background:#d0d0d0"></div>
<div class="a" style="left:519px;top:385px;width:1px;height:17px;background:#d0d0d0"></div>
<div class="a" style="left:562px;top:385px;width:1px;height:17px;background:#d0d0d0"></div>
<div class="a" style="left:605px;top:385px;width:1px;height:17px;background:#d0d0d0"></div>
<div class="a" style="left:648px;top:385px;width:1px;height:18px;background:#d0d0d0"></div>
<div class="b sl" style="left:25px;top:388px;color:#e2000e;transform:scaleX(1.32)">011412698</div>
<div class="b sl" style="left:105px;top:388px;color:#e2000e;transform:scaleX(1.17)">VENDIDA</div>
<div class="b sl" style="left:193px;top:388px;color:#e2000e;transform:scaleX(1.2);letter-spacing:1.4px">23/10/14</div>
<div class="b sl" style="left:263px;top:388px;color:#e2000e;transform:scaleX(1.32)">2449</div>
<div class="b sr" style="right:278px;top:388px;color:#e2000e;transform:scaleX(1.32)">5.00</div>
<div class="b sr" style="right:219px;top:388px;color:#e2000e;transform:scaleX(1.32)">0.0</div>
<div class="b sr" style="right:165px;top:388px;color:#e2000e;transform:scaleX(1.32)">0</div>
<div class="b sr" style="right:122px;top:388px;color:#e2000e;transform:scaleX(1.32)">5</div>
<div class="b sr" style="right:79px;top:388px;color:#e2000e;transform:scaleX(1.32)">0</div>
<div class="b sr" style="right:36px;top:388px;color:#e2000e;transform:scaleX(1.32)">0</div>
<div class="a" style="left:11px;top:403px;width:12px;height:18px;background:#000"></div>
<div class="a" style="left:11px;top:403px;width:11px;height:17px;background:#800080;border-top:1px solid #fff;border-left:1px solid #fff;border-right:1px solid #c896c8;border-bottom:1px solid #c896c8"></div>
<div class="a" style="left:23px;top:403px;width:626px;height:17px;background:#fff"></div>
<div class="a" style="left:23px;top:403px;width:79px;height:17px;background:#fffde8"></div>
<div class="a" style="left:23px;top:420px;width:626px;height:1px;background:#d0d0d0"></div>
<div class="a" style="left:102px;top:403px;width:1px;height:17px;background:#d0d0d0"></div>
<div class="a" style="left:190px;top:403px;width:1px;height:17px;background:#d0d0d0"></div>
<div class="a" style="left:260px;top:403px;width:1px;height:17px;background:#d0d0d0"></div>
<div class="a" style="left:350px;top:403px;width:1px;height:17px;background:#d0d0d0"></div>
<div class="a" style="left:406px;top:403px;width:1px;height:17px;background:#d0d0d0"></div>
<div class="a" style="left:465px;top:403px;width:1px;height:17px;background:#d0d0d0"></div>
<div class="a" style="left:519px;top:403px;width:1px;height:17px;background:#d0d0d0"></div>
<div class="a" style="left:562px;top:403px;width:1px;height:17px;background:#d0d0d0"></div>
<div class="a" style="left:605px;top:403px;width:1px;height:17px;background:#d0d0d0"></div>
<div class="a" style="left:648px;top:403px;width:1px;height:18px;background:#d0d0d0"></div>
<div class="b sl" style="left:25px;top:406px;color:#000;transform:scaleX(1.32)">011412679</div>
<div class="b sl" style="left:105px;top:406px;color:#000;transform:scaleX(1.17)">VENDIDA</div>
<div class="b sl" style="left:193px;top:406px;color:#000;transform:scaleX(1.2);letter-spacing:1.4px">23/10/14</div>
<div class="b sl" style="left:263px;top:406px;color:#000;transform:scaleX(1.17)">X</div>
<div class="b sr" style="right:278px;top:406px;color:#000;transform:scaleX(1.32)">5.00</div>
<div class="b sr" style="right:219px;top:406px;color:#000;transform:scaleX(1.32)">0.0</div>
<div class="b sr" style="right:165px;top:406px;color:#000;transform:scaleX(1.32)">0</div>
<div class="b sr" style="right:122px;top:406px;color:#000;transform:scaleX(1.32)">1</div>
<div class="b sr" style="right:79px;top:406px;color:#000;transform:scaleX(1.32)">1</div>
<div class="b sr" style="right:36px;top:406px;color:#000;transform:scaleX(1.32)">0</div>
<div class="a" style="left:11px;top:421px;width:12px;height:18px;background:#000"></div>
<div class="a" style="left:11px;top:421px;width:11px;height:17px;background:#800080;border-top:1px solid #fff;border-left:1px solid #fff;border-right:1px solid #c896c8;border-bottom:1px solid #c896c8"></div>
<div class="a" style="left:23px;top:421px;width:626px;height:17px;background:#fff"></div>
<div class="a" style="left:23px;top:421px;width:79px;height:17px;background:#fffde8"></div>
<div class="a" style="left:23px;top:438px;width:626px;height:1px;background:#d0d0d0"></div>
<div class="a" style="left:102px;top:421px;width:1px;height:17px;background:#d0d0d0"></div>
<div class="a" style="left:190px;top:421px;width:1px;height:17px;background:#d0d0d0"></div>
<div class="a" style="left:260px;top:421px;width:1px;height:17px;background:#d0d0d0"></div>
<div class="a" style="left:350px;top:421px;width:1px;height:17px;background:#d0d0d0"></div>
<div class="a" style="left:406px;top:421px;width:1px;height:17px;background:#d0d0d0"></div>
<div class="a" style="left:465px;top:421px;width:1px;height:17px;background:#d0d0d0"></div>
<div class="a" style="left:519px;top:421px;width:1px;height:17px;background:#d0d0d0"></div>
<div class="a" style="left:562px;top:421px;width:1px;height:17px;background:#d0d0d0"></div>
<div class="a" style="left:605px;top:421px;width:1px;height:17px;background:#d0d0d0"></div>
<div class="a" style="left:648px;top:421px;width:1px;height:18px;background:#d0d0d0"></div>
<div class="b sl" style="left:25px;top:424px;color:#e2000e;transform:scaleX(1.32)">011412678</div>
<div class="b sl" style="left:105px;top:424px;color:#e2000e;transform:scaleX(1.17)">VENDIDA</div>
<div class="b sl" style="left:193px;top:424px;color:#e2000e;transform:scaleX(1.2);letter-spacing:1.4px">23/10/14</div>
<div class="b sl" style="left:263px;top:424px;color:#e2000e;transform:scaleX(1.32)">2383</div>
<div class="b sr" style="right:278px;top:424px;color:#e2000e;transform:scaleX(1.32)">5.00</div>
<div class="b sr" style="right:219px;top:424px;color:#e2000e;transform:scaleX(1.32)">0.0</div>
<div class="b sr" style="right:165px;top:424px;color:#e2000e;transform:scaleX(1.32)">0</div>
<div class="b sr" style="right:122px;top:424px;color:#e2000e;transform:scaleX(1.32)">1</div>
<div class="b sr" style="right:79px;top:424px;color:#e2000e;transform:scaleX(1.32)">0</div>
<div class="b sr" style="right:36px;top:424px;color:#e2000e;transform:scaleX(1.32)">0</div>
<div class="a" style="left:11px;top:439px;width:12px;height:18px;background:#000"></div>
<div class="a" style="left:11px;top:439px;width:11px;height:17px;background:#800080;border-top:1px solid #fff;border-left:1px solid #fff;border-right:1px solid #c896c8;border-bottom:1px solid #c896c8"></div>
<div class="a" style="left:23px;top:439px;width:626px;height:17px;background:#fff"></div>
<div class="a" style="left:23px;top:439px;width:79px;height:17px;background:#fffde8"></div>
<div class="a" style="left:23px;top:456px;width:626px;height:1px;background:#d0d0d0"></div>
<div class="a" style="left:102px;top:439px;width:1px;height:17px;background:#d0d0d0"></div>
<div class="a" style="left:190px;top:439px;width:1px;height:17px;background:#d0d0d0"></div>
<div class="a" style="left:260px;top:439px;width:1px;height:17px;background:#d0d0d0"></div>
<div class="a" style="left:350px;top:439px;width:1px;height:17px;background:#d0d0d0"></div>
<div class="a" style="left:406px;top:439px;width:1px;height:17px;background:#d0d0d0"></div>
<div class="a" style="left:465px;top:439px;width:1px;height:17px;background:#d0d0d0"></div>
<div class="a" style="left:519px;top:439px;width:1px;height:17px;background:#d0d0d0"></div>
<div class="a" style="left:562px;top:439px;width:1px;height:17px;background:#d0d0d0"></div>
<div class="a" style="left:605px;top:439px;width:1px;height:17px;background:#d0d0d0"></div>
<div class="a" style="left:648px;top:439px;width:1px;height:18px;background:#d0d0d0"></div>
<div class="b sl" style="left:25px;top:442px;color:#000;transform:scaleX(1.32)">011412671</div>
<div class="b sl" style="left:105px;top:442px;color:#000;transform:scaleX(1.17)">VENDIDA</div>
<div class="b sl" style="left:193px;top:442px;color:#000;transform:scaleX(1.2);letter-spacing:1.4px">23/10/14</div>
<div class="b sl" style="left:263px;top:442px;color:#000;transform:scaleX(1.32)">2285</div>
<div class="b sr" style="right:278px;top:442px;color:#000;transform:scaleX(1.32)">5.00</div>
<div class="b sr" style="right:219px;top:442px;color:#000;transform:scaleX(1.32)">0.0</div>
<div class="b sr" style="right:165px;top:442px;color:#000;transform:scaleX(1.32)">0</div>
<div class="b sr" style="right:122px;top:442px;color:#000;transform:scaleX(1.32)">2</div>
<div class="b sr" style="right:79px;top:442px;color:#000;transform:scaleX(1.32)">2</div>
<div class="b sr" style="right:36px;top:442px;color:#000;transform:scaleX(1.32)">0</div>
<div class="a" style="left:11px;top:457px;width:12px;height:18px;background:#000"></div>
<div class="a" style="left:11px;top:457px;width:11px;height:17px;background:#800080;border-top:1px solid #fff;border-left:1px solid #fff;border-right:1px solid #c896c8;border-bottom:1px solid #c896c8"></div>
<div class="a" style="left:23px;top:457px;width:626px;height:17px;background:#fff"></div>
<div class="a" style="left:23px;top:457px;width:79px;height:17px;background:#fffde8"></div>
<div class="a" style="left:23px;top:474px;width:626px;height:1px;background:#d0d0d0"></div>
<div class="a" style="left:102px;top:457px;width:1px;height:17px;background:#d0d0d0"></div>
<div class="a" style="left:190px;top:457px;width:1px;height:17px;background:#d0d0d0"></div>
<div class="a" style="left:260px;top:457px;width:1px;height:17px;background:#d0d0d0"></div>
<div class="a" style="left:350px;top:457px;width:1px;height:17px;background:#d0d0d0"></div>
<div class="a" style="left:406px;top:457px;width:1px;height:17px;background:#d0d0d0"></div>
<div class="a" style="left:465px;top:457px;width:1px;height:17px;background:#d0d0d0"></div>
<div class="a" style="left:519px;top:457px;width:1px;height:17px;background:#d0d0d0"></div>
<div class="a" style="left:562px;top:457px;width:1px;height:17px;background:#d0d0d0"></div>
<div class="a" style="left:605px;top:457px;width:1px;height:17px;background:#d0d0d0"></div>
<div class="a" style="left:648px;top:457px;width:1px;height:18px;background:#d0d0d0"></div>
<div class="b sl" style="left:25px;top:460px;color:#000;transform:scaleX(1.32)">011412670</div>
<div class="b sl" style="left:105px;top:460px;color:#000;transform:scaleX(1.17)">VENDIDA</div>
<div class="b sl" style="left:193px;top:460px;color:#000;transform:scaleX(1.2);letter-spacing:1.4px">23/10/14</div>
<div class="b sl" style="left:263px;top:460px;color:#000;transform:scaleX(1.32)">2315</div>
<div class="b sr" style="right:278px;top:460px;color:#000;transform:scaleX(1.32)">5.00</div>
<div class="b sr" style="right:219px;top:460px;color:#000;transform:scaleX(1.32)">0.0</div>
<div class="b sr" style="right:165px;top:460px;color:#000;transform:scaleX(1.32)">0</div>
<div class="b sr" style="right:122px;top:460px;color:#000;transform:scaleX(1.32)">4</div>
<div class="b sr" style="right:79px;top:460px;color:#000;transform:scaleX(1.32)">4</div>
<div class="b sr" style="right:36px;top:460px;color:#000;transform:scaleX(1.32)">0</div>
<div class="a" style="left:11px;top:475px;width:12px;height:18px;background:#000"></div>
<div class="a" style="left:11px;top:475px;width:11px;height:17px;background:#800080;border-top:1px solid #fff;border-left:1px solid #fff;border-right:1px solid #c896c8;border-bottom:1px solid #c896c8"></div>
<div class="a" style="left:23px;top:475px;width:626px;height:17px;background:#808080"></div>
<div class="a" style="left:23px;top:492px;width:626px;height:1px;background:#d0d0d0"></div>
<div class="a" style="left:102px;top:475px;width:1px;height:17px;background:#d0d0d0"></div>
<div class="a" style="left:190px;top:475px;width:1px;height:17px;background:#d0d0d0"></div>
<div class="a" style="left:260px;top:475px;width:1px;height:17px;background:#d0d0d0"></div>
<div class="a" style="left:350px;top:475px;width:1px;height:17px;background:#d0d0d0"></div>
<div class="a" style="left:406px;top:475px;width:1px;height:17px;background:#d0d0d0"></div>
<div class="a" style="left:465px;top:475px;width:1px;height:17px;background:#d0d0d0"></div>
<div class="a" style="left:519px;top:475px;width:1px;height:17px;background:#d0d0d0"></div>
<div class="a" style="left:562px;top:475px;width:1px;height:17px;background:#d0d0d0"></div>
<div class="a" style="left:605px;top:475px;width:1px;height:17px;background:#d0d0d0"></div>
<div class="a" style="left:648px;top:475px;width:1px;height:18px;background:#d0d0d0"></div>
<div class="b sl" style="left:25px;top:478px;color:#ec0010;transform:scaleX(1.32)">011412660</div>
<div class="b sl" style="left:105px;top:478px;color:#ec0010;transform:scaleX(1.17)">LIQUIDADA</div>
<div class="b sl" style="left:193px;top:478px;color:#ec0010;transform:scaleX(1.2);letter-spacing:1.4px">23/10/14</div>
<div class="b sl" style="left:263px;top:478px;color:#ec0010;transform:scaleX(1.32)">2316</div>
<div class="b sr" style="right:278px;top:478px;color:#ec0010;transform:scaleX(1.32)">5.00</div>
<div class="b sr" style="right:219px;top:478px;color:#ec0010;transform:scaleX(1.32)">0.0</div>
<div class="b sr" style="right:165px;top:478px;color:#ec0010;transform:scaleX(1.32)">0</div>
<div class="b sr" style="right:122px;top:478px;color:#ec0010;transform:scaleX(1.32)">4</div>
<div class="b sr" style="right:79px;top:478px;color:#ec0010;transform:scaleX(1.32)">4</div>
<div class="b sr" style="right:36px;top:478px;color:#ec0010;transform:scaleX(1.32)">4</div>
<div class="a" style="left:11px;top:493px;width:12px;height:18px;background:#000"></div>
<div class="a" style="left:11px;top:493px;width:11px;height:17px;background:#800080;border-top:1px solid #fff;border-left:1px solid #fff;border-right:1px solid #c896c8;border-bottom:1px solid #c896c8"></div>
<div class="a" style="left:23px;top:493px;width:626px;height:17px;background:#808080"></div>
<div class="a" style="left:23px;top:510px;width:626px;height:1px;background:#d0d0d0"></div>
<div class="a" style="left:102px;top:493px;width:1px;height:17px;background:#d0d0d0"></div>
<div class="a" style="left:190px;top:493px;width:1px;height:17px;background:#d0d0d0"></div>
<div class="a" style="left:260px;top:493px;width:1px;height:17px;background:#d0d0d0"></div>
<div class="a" style="left:350px;top:493px;width:1px;height:17px;background:#d0d0d0"></div>
<div class="a" style="left:406px;top:493px;width:1px;height:17px;background:#d0d0d0"></div>
<div class="a" style="left:465px;top:493px;width:1px;height:17px;background:#d0d0d0"></div>
<div class="a" style="left:519px;top:493px;width:1px;height:17px;background:#d0d0d0"></div>
<div class="a" style="left:562px;top:493px;width:1px;height:17px;background:#d0d0d0"></div>
<div class="a" style="left:605px;top:493px;width:1px;height:17px;background:#d0d0d0"></div>
<div class="a" style="left:648px;top:493px;width:1px;height:18px;background:#d0d0d0"></div>
<div class="b sl" style="left:25px;top:496px;color:#ec0010;transform:scaleX(1.32)">011412649</div>
<div class="b sl" style="left:105px;top:496px;color:#ec0010;transform:scaleX(1.17)">LIQUIDADA</div>
<div class="b sl" style="left:193px;top:496px;color:#ec0010;transform:scaleX(1.2);letter-spacing:1.4px">23/10/14</div>
<div class="b sl" style="left:263px;top:496px;color:#ec0010;transform:scaleX(1.32)">2317</div>
<div class="b sr" style="right:278px;top:496px;color:#ec0010;transform:scaleX(1.32)">5.00</div>
<div class="b sr" style="right:219px;top:496px;color:#ec0010;transform:scaleX(1.32)">0.0</div>
<div class="b sr" style="right:165px;top:496px;color:#ec0010;transform:scaleX(1.32)">0</div>
<div class="b sr" style="right:122px;top:496px;color:#ec0010;transform:scaleX(1.32)">1</div>
<div class="b sr" style="right:79px;top:496px;color:#ec0010;transform:scaleX(1.32)">1</div>
<div class="b sr" style="right:36px;top:496px;color:#ec0010;transform:scaleX(1.32)">1</div>
<div class="a" style="left:11px;top:511px;width:12px;height:18px;background:#000"></div>
<div class="a" style="left:11px;top:511px;width:11px;height:17px;background:#800080;border-top:1px solid #fff;border-left:1px solid #fff;border-right:1px solid #c896c8;border-bottom:1px solid #c896c8"></div>
<div class="a" style="left:23px;top:511px;width:626px;height:17px;background:#808080"></div>
<div class="a" style="left:23px;top:528px;width:626px;height:1px;background:#d0d0d0"></div>
<div class="a" style="left:102px;top:511px;width:1px;height:17px;background:#d0d0d0"></div>
<div class="a" style="left:190px;top:511px;width:1px;height:17px;background:#d0d0d0"></div>
<div class="a" style="left:260px;top:511px;width:1px;height:17px;background:#d0d0d0"></div>
<div class="a" style="left:350px;top:511px;width:1px;height:17px;background:#d0d0d0"></div>
<div class="a" style="left:406px;top:511px;width:1px;height:17px;background:#d0d0d0"></div>
<div class="a" style="left:465px;top:511px;width:1px;height:17px;background:#d0d0d0"></div>
<div class="a" style="left:519px;top:511px;width:1px;height:17px;background:#d0d0d0"></div>
<div class="a" style="left:562px;top:511px;width:1px;height:17px;background:#d0d0d0"></div>
<div class="a" style="left:605px;top:511px;width:1px;height:17px;background:#d0d0d0"></div>
<div class="a" style="left:648px;top:511px;width:1px;height:18px;background:#d0d0d0"></div>
<div class="b sl" style="left:25px;top:514px;color:#ec0010;transform:scaleX(1.32)">011412648</div>
<div class="b sl" style="left:105px;top:514px;color:#ec0010;transform:scaleX(1.17)">LIQUIDADA</div>
<div class="b sl" style="left:193px;top:514px;color:#ec0010;transform:scaleX(1.2);letter-spacing:1.4px">23/10/14</div>
<div class="b sl" style="left:263px;top:514px;color:#ec0010;transform:scaleX(1.32)">2312</div>
<div class="b sr" style="right:278px;top:514px;color:#ec0010;transform:scaleX(1.32)">5.00</div>
<div class="b sr" style="right:219px;top:514px;color:#ec0010;transform:scaleX(1.32)">0.0</div>
<div class="b sr" style="right:165px;top:514px;color:#ec0010;transform:scaleX(1.32)">0</div>
<div class="b sr" style="right:122px;top:514px;color:#ec0010;transform:scaleX(1.32)">4</div>
<div class="b sr" style="right:79px;top:514px;color:#ec0010;transform:scaleX(1.32)">4</div>
<div class="b sr" style="right:36px;top:514px;color:#ec0010;transform:scaleX(1.32)">4</div>
<div class="a" style="left:11px;top:529px;width:12px;height:18px;background:#000"></div>
<div class="a" style="left:11px;top:529px;width:11px;height:17px;background:#800080;border-top:1px solid #fff;border-left:1px solid #fff;border-right:1px solid #c896c8;border-bottom:1px solid #c896c8"></div>
<div class="a" style="left:23px;top:529px;width:626px;height:17px;background:#808080"></div>
<div class="a" style="left:23px;top:546px;width:626px;height:1px;background:#d0d0d0"></div>
<div class="a" style="left:102px;top:529px;width:1px;height:17px;background:#d0d0d0"></div>
<div class="a" style="left:190px;top:529px;width:1px;height:17px;background:#d0d0d0"></div>
<div class="a" style="left:260px;top:529px;width:1px;height:17px;background:#d0d0d0"></div>
<div class="a" style="left:350px;top:529px;width:1px;height:17px;background:#d0d0d0"></div>
<div class="a" style="left:406px;top:529px;width:1px;height:17px;background:#d0d0d0"></div>
<div class="a" style="left:465px;top:529px;width:1px;height:17px;background:#d0d0d0"></div>
<div class="a" style="left:519px;top:529px;width:1px;height:17px;background:#d0d0d0"></div>
<div class="a" style="left:562px;top:529px;width:1px;height:17px;background:#d0d0d0"></div>
<div class="a" style="left:605px;top:529px;width:1px;height:17px;background:#d0d0d0"></div>
<div class="a" style="left:648px;top:529px;width:1px;height:18px;background:#d0d0d0"></div>
<div class="b sl" style="left:25px;top:532px;color:#ec0010;transform:scaleX(1.32)">011412638</div>
<div class="b sl" style="left:105px;top:532px;color:#ec0010;transform:scaleX(1.17)">LIQUIDADA</div>
<div class="b sl" style="left:193px;top:532px;color:#ec0010;transform:scaleX(1.2);letter-spacing:1.4px">23/10/14</div>
<div class="b sl" style="left:263px;top:532px;color:#ec0010;transform:scaleX(1.32)">2129</div>
<div class="b sr" style="right:278px;top:532px;color:#ec0010;transform:scaleX(1.32)">5.00</div>
<div class="b sr" style="right:219px;top:532px;color:#ec0010;transform:scaleX(1.32)">0.0</div>
<div class="b sr" style="right:165px;top:532px;color:#ec0010;transform:scaleX(1.32)">0</div>
<div class="b sr" style="right:122px;top:532px;color:#ec0010;transform:scaleX(1.32)">3</div>
<div class="b sr" style="right:79px;top:532px;color:#ec0010;transform:scaleX(1.32)">3</div>
<div class="b sr" style="right:36px;top:532px;color:#ec0010;transform:scaleX(1.32)">3</div>
<div class="a" style="left:11px;top:547px;width:12px;height:18px;background:#000"></div>
<div class="a" style="left:11px;top:547px;width:11px;height:17px;background:#800080;border-top:1px solid #fff;border-left:1px solid #fff;border-right:1px solid #c896c8;border-bottom:1px solid #c896c8"></div>
<div class="a" style="left:23px;top:547px;width:626px;height:17px;background:#808080"></div>
<div class="a" style="left:23px;top:564px;width:626px;height:1px;background:#d0d0d0"></div>
<div class="a" style="left:102px;top:547px;width:1px;height:17px;background:#d0d0d0"></div>
<div class="a" style="left:190px;top:547px;width:1px;height:17px;background:#d0d0d0"></div>
<div class="a" style="left:260px;top:547px;width:1px;height:17px;background:#d0d0d0"></div>
<div class="a" style="left:350px;top:547px;width:1px;height:17px;background:#d0d0d0"></div>
<div class="a" style="left:406px;top:547px;width:1px;height:17px;background:#d0d0d0"></div>
<div class="a" style="left:465px;top:547px;width:1px;height:17px;background:#d0d0d0"></div>
<div class="a" style="left:519px;top:547px;width:1px;height:17px;background:#d0d0d0"></div>
<div class="a" style="left:562px;top:547px;width:1px;height:17px;background:#d0d0d0"></div>
<div class="a" style="left:605px;top:547px;width:1px;height:17px;background:#d0d0d0"></div>
<div class="a" style="left:648px;top:547px;width:1px;height:18px;background:#d0d0d0"></div>
<div class="b sl" style="left:25px;top:550px;color:#ec0010;transform:scaleX(1.32)">011412637</div>
<div class="b sl" style="left:105px;top:550px;color:#ec0010;transform:scaleX(1.17)">LIQUIDADA</div>
<div class="b sl" style="left:193px;top:550px;color:#ec0010;transform:scaleX(1.2);letter-spacing:1.4px">23/10/14</div>
<div class="b sl" style="left:263px;top:550px;color:#ec0010;transform:scaleX(1.32)">2447</div>
<div class="b sr" style="right:278px;top:550px;color:#ec0010;transform:scaleX(1.32)">5.00</div>
<div class="b sr" style="right:219px;top:550px;color:#ec0010;transform:scaleX(1.32)">0.0</div>
<div class="b sr" style="right:165px;top:550px;color:#ec0010;transform:scaleX(1.32)">0</div>
<div class="b sr" style="right:122px;top:550px;color:#ec0010;transform:scaleX(1.32)">4</div>
<div class="b sr" style="right:79px;top:550px;color:#ec0010;transform:scaleX(1.32)">4</div>
<div class="b sr" style="right:36px;top:550px;color:#ec0010;transform:scaleX(1.32)">4</div>
<div class="a" style="left:11px;top:565px;width:12px;height:18px;background:#000"></div>
<div class="a" style="left:11px;top:565px;width:11px;height:17px;background:#800080;border-top:1px solid #fff;border-left:1px solid #fff;border-right:1px solid #c896c8;border-bottom:1px solid #c896c8"></div>
<div class="a" style="left:23px;top:565px;width:626px;height:17px;background:#fff"></div>
<div class="a" style="left:23px;top:565px;width:79px;height:17px;background:#fffde8"></div>
<div class="a" style="left:23px;top:582px;width:626px;height:1px;background:#d0d0d0"></div>
<div class="a" style="left:102px;top:565px;width:1px;height:17px;background:#d0d0d0"></div>
<div class="a" style="left:190px;top:565px;width:1px;height:17px;background:#d0d0d0"></div>
<div class="a" style="left:260px;top:565px;width:1px;height:17px;background:#d0d0d0"></div>
<div class="a" style="left:350px;top:565px;width:1px;height:17px;background:#d0d0d0"></div>
<div class="a" style="left:406px;top:565px;width:1px;height:17px;background:#d0d0d0"></div>
<div class="a" style="left:465px;top:565px;width:1px;height:17px;background:#d0d0d0"></div>
<div class="a" style="left:519px;top:565px;width:1px;height:17px;background:#d0d0d0"></div>
<div class="a" style="left:562px;top:565px;width:1px;height:17px;background:#d0d0d0"></div>
<div class="a" style="left:605px;top:565px;width:1px;height:17px;background:#d0d0d0"></div>
<div class="a" style="left:648px;top:565px;width:1px;height:18px;background:#d0d0d0"></div>
<div class="b sl" style="left:25px;top:568px;color:#000;transform:scaleX(1.32)">011412599</div>
<div class="b sl" style="left:105px;top:568px;color:#000;transform:scaleX(1.17)">VENDIDA</div>
<div class="b sl" style="left:193px;top:568px;color:#000;transform:scaleX(1.2);letter-spacing:1.4px">22/10/14</div>
<div class="b sl" style="left:263px;top:568px;color:#000;transform:scaleX(1.32)">002153</div>
<div class="b sr" style="right:278px;top:568px;color:#000;transform:scaleX(1.32)">5.00</div>
<div class="b sr" style="right:219px;top:568px;color:#000;transform:scaleX(1.32)">0.0</div>
<div class="b sr" style="right:165px;top:568px;color:#000;transform:scaleX(1.32)">0</div>
<div class="b sr" style="right:122px;top:568px;color:#000;transform:scaleX(1.32)">2</div>
<div class="b sr" style="right:79px;top:568px;color:#000;transform:scaleX(1.32)">2</div>
<div class="b sr" style="right:36px;top:568px;color:#000;transform:scaleX(1.32)">0</div>
<div class="a" style="left:11px;top:583px;width:12px;height:18px;background:#000"></div>
<div class="a" style="left:11px;top:583px;width:11px;height:17px;background:#800080;border-top:1px solid #fff;border-left:1px solid #fff;border-right:1px solid #c896c8;border-bottom:1px solid #c896c8"></div>
<div class="a" style="left:23px;top:583px;width:626px;height:17px;background:#fff"></div>
<div class="a" style="left:23px;top:583px;width:79px;height:17px;background:#fffde8"></div>
<div class="a" style="left:23px;top:600px;width:626px;height:1px;background:#d0d0d0"></div>
<div class="a" style="left:102px;top:583px;width:1px;height:17px;background:#d0d0d0"></div>
<div class="a" style="left:190px;top:583px;width:1px;height:17px;background:#d0d0d0"></div>
<div class="a" style="left:260px;top:583px;width:1px;height:17px;background:#d0d0d0"></div>
<div class="a" style="left:350px;top:583px;width:1px;height:17px;background:#d0d0d0"></div>
<div class="a" style="left:406px;top:583px;width:1px;height:17px;background:#d0d0d0"></div>
<div class="a" style="left:465px;top:583px;width:1px;height:17px;background:#d0d0d0"></div>
<div class="a" style="left:519px;top:583px;width:1px;height:17px;background:#d0d0d0"></div>
<div class="a" style="left:562px;top:583px;width:1px;height:17px;background:#d0d0d0"></div>
<div class="a" style="left:605px;top:583px;width:1px;height:17px;background:#d0d0d0"></div>
<div class="a" style="left:648px;top:583px;width:1px;height:18px;background:#d0d0d0"></div>
<div class="b sl" style="left:25px;top:586px;color:#000;transform:scaleX(1.32)">011412598</div>
<div class="b sl" style="left:105px;top:586px;color:#000;transform:scaleX(1.17)">VENDIDA</div>
<div class="b sl" style="left:193px;top:586px;color:#000;transform:scaleX(1.2);letter-spacing:1.4px">22/10/14</div>
<div class="b sl" style="left:263px;top:586px;color:#000;transform:scaleX(1.32)">002153</div>
<div class="b sr" style="right:278px;top:586px;color:#000;transform:scaleX(1.32)">5.00</div>
<div class="b sr" style="right:219px;top:586px;color:#000;transform:scaleX(1.32)">0.0</div>
<div class="b sr" style="right:165px;top:586px;color:#000;transform:scaleX(1.32)">0</div>
<div class="b sr" style="right:122px;top:586px;color:#000;transform:scaleX(1.32)">3</div>
<div class="b sr" style="right:79px;top:586px;color:#000;transform:scaleX(1.32)">3</div>
<div class="b sr" style="right:36px;top:586px;color:#000;transform:scaleX(1.32)">0</div>
<div class="a" style="left:11px;top:601px;width:12px;height:18px;background:#000"></div>
<div class="a" style="left:11px;top:601px;width:11px;height:17px;background:#800080;border-top:1px solid #fff;border-left:1px solid #fff;border-right:1px solid #c896c8;border-bottom:1px solid #c896c8"></div>
<div class="a" style="left:23px;top:601px;width:626px;height:17px;background:#808080"></div>
<div class="a" style="left:23px;top:618px;width:626px;height:1px;background:#d0d0d0"></div>
<div class="a" style="left:102px;top:601px;width:1px;height:17px;background:#d0d0d0"></div>
<div class="a" style="left:190px;top:601px;width:1px;height:17px;background:#d0d0d0"></div>
<div class="a" style="left:260px;top:601px;width:1px;height:17px;background:#d0d0d0"></div>
<div class="a" style="left:350px;top:601px;width:1px;height:17px;background:#d0d0d0"></div>
<div class="a" style="left:406px;top:601px;width:1px;height:17px;background:#d0d0d0"></div>
<div class="a" style="left:465px;top:601px;width:1px;height:17px;background:#d0d0d0"></div>
<div class="a" style="left:519px;top:601px;width:1px;height:17px;background:#d0d0d0"></div>
<div class="a" style="left:562px;top:601px;width:1px;height:17px;background:#d0d0d0"></div>
<div class="a" style="left:605px;top:601px;width:1px;height:17px;background:#d0d0d0"></div>
<div class="a" style="left:648px;top:601px;width:1px;height:18px;background:#d0d0d0"></div>
<div class="b sl" style="left:25px;top:604px;color:#ec0010;transform:scaleX(1.32)">011412591</div>
<div class="b sl" style="left:105px;top:604px;color:#ec0010;transform:scaleX(1.17)">LIQUIDADA</div>
<div class="b sl" style="left:193px;top:604px;color:#ec0010;transform:scaleX(1.2);letter-spacing:1.4px">21/10/14</div>
<div class="b sl" style="left:263px;top:604px;color:#ec0010;transform:scaleX(1.32)">002156</div>
<div class="b sr" style="right:278px;top:604px;color:#ec0010;transform:scaleX(1.32)">5.00</div>
<div class="b sr" style="right:219px;top:604px;color:#ec0010;transform:scaleX(1.32)">0.0</div>
<div class="b sr" style="right:165px;top:604px;color:#ec0010;transform:scaleX(1.32)">0</div>
<div class="b sr" style="right:122px;top:604px;color:#ec0010;transform:scaleX(1.32)">1</div>
<div class="b sr" style="right:79px;top:604px;color:#ec0010;transform:scaleX(1.32)">1</div>
<div class="b sr" style="right:36px;top:604px;color:#ec0010;transform:scaleX(1.32)">1</div>
<div class="a" style="left:653px;top:187px;width:17px;height:436px;background:#f0f0f0"></div>
<svg class="a" style="left:656px;top:192px" width="10" height="8"><path d="M1.3 6.5 L4.8 2.6 L8.3 6.5" stroke="#505050" stroke-width="2.1" fill="none"/></svg>
<svg class="a" style="left:656px;top:609px" width="10" height="8"><path d="M1.3 1.5 L4.8 5.4 L8.3 1.5" stroke="#505050" stroke-width="2.1" fill="none"/></svg>
<div class="a" style="left:653px;top:396px;width:15px;height:17px;background:#cdcdcd"></div>
<div class="a" style="left:0;top:626px;width:681px;height:19px;background:#f2f2f2"></div>
<div class="t" style="left:5px;top:627px;font-size:11px;letter-spacing:0;color:#000">30/11/14</div>
<div class="t" style="left:58px;top:627px;font-size:11px;letter-spacing:0;color:#000">PEDRO.N/A.000 (009)</div>
<div class="t" style="left:177px;top:627px;font-size:11px;letter-spacing:0;color:#000">NIVEL.8</div>
<div class="t" style="left:224px;top:627px;font-size:11px;letter-spacing:0;color:#000">E3</div>
<div class="t" style="left:243px;top:627px;font-size:11px;letter-spacing:0;color:#000">[DB.03.C]</div>
<div class="t" style="left:310px;top:627px;font-size:11px;letter-spacing:0;color:#000">CONSORFRUT GESTFRUT</div>
<div class="t" style="left:468px;top:627px;font-size:11px;letter-spacing:0;color:#000">[C] CONSORFRUT (VALE</div>
<div class="a" style="left:3px;top:632px;width:1px;height:7px;background:#a0a0a0"></div>
<div class="a" style="left:56px;top:632px;width:1px;height:7px;background:#a0a0a0"></div>
<div class="a" style="left:175px;top:632px;width:1px;height:7px;background:#a0a0a0"></div>
<div class="a" style="left:222px;top:632px;width:1px;height:7px;background:#a0a0a0"></div>
<div class="a" style="left:241px;top:632px;width:1px;height:7px;background:#a0a0a0"></div>
<div class="a" style="left:465px;top:632px;width:1px;height:7px;background:#a0a0a0"></div>
<div class="a" style="left:595px;top:626px;width:26px;height:19px;background:#f2f2f2"></div>
<svg class="a" style="left:602px;top:630px" width="12" height="10"><path d="M1 9 L9 1 M5 9 L11 3" stroke="#909090" stroke-width="1.2"/></svg>
<div class="a" style="left:0;top:640px;width:621px;height:5px;background:#e6e6e6"></div>
<div class="a" style="left:620px;top:632px;width:61px;height:13px;background:#a8bcd8"></div>
<div class="a" style="left:620px;top:636px;width:61px;height:1px;background:#5a7aaa"></div>
<div class="a" style="left:620px;top:637px;width:61px;height:2px;background:#b8d0f0"></div>
<div class="a" style="left:620px;top:639px;width:61px;height:1px;background:#5a7aaa"></div>
<div class="a" style="left:620px;top:640px;width:61px;height:2px;background:#c0d4ee"></div>
<div class="a" style="left:620px;top:642px;width:16px;height:3px;background:#ead8b8"></div>
<div class="a" style="left:636px;top:642px;width:45px;height:3px;background:#c8daf2"></div>
<div class="a" style="left:655px;top:642px;width:1px;height:3px;background:#8aa0c0"></div>
<div class="a" style="left:672px;top:642px;width:1px;height:3px;background:#8aa0c0"></div>
<div class="a" style="left:0;top:626px;width:680px;height:6px;background:#fafafa"></div>
<div class="a" style="left:680px;top:4px;width:1px;height:629px;background:#c8c8c8"></div>
<div class="a" style="left:0;top:632px;width:681px;height:1px;background:#e4e4e4"></div>
</body></html>
